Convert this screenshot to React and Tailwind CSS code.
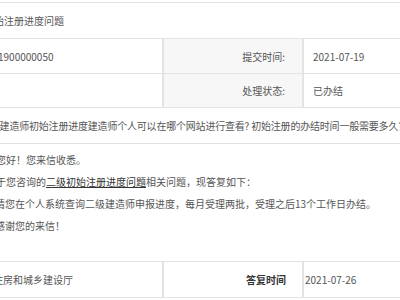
export default function App() {
  const font = { fontFamily: '"Noto Sans CJK SC", "Microsoft YaHei", sans-serif' };
  return (
    <div
      className="w-[400px] h-[300px] overflow-hidden bg-white text-[10px] text-[#555] pt-[2px]"
      style={font}
    >
      <div className="border-b border-[#e3e3e3]">
        {/* Row 1: title */}
        <div className="h-[36px] border-t border-[#e3e3e3] flex items-center whitespace-nowrap">
          <span className="ml-[-66px]">二级建造师初始注册进度问题</span>
        </div>
        {/* Row 2 */}
        <div className="h-[35px] border-t border-[#e3e3e3] flex">
          <div className="w-[164px] shrink-0 border-r-2 border-[#e3e3e3] flex items-center whitespace-nowrap">
            <span className="ml-[-2px]">1900000050</span>
          </div>
          <div className="w-[140px] shrink-0 border-r-2 border-[#e3e3e3] bg-[#f7f7f7] flex items-center justify-end pr-[17px]">
            提交时间:
          </div>
          <div className="flex-1 flex items-center pl-[9px]">2021-07-19</div>
        </div>
        {/* Row 3 */}
        <div className="h-[34px] border-t border-[#e3e3e3] flex">
          <div className="w-[164px] shrink-0 border-r-2 border-[#e3e3e3]"></div>
          <div className="w-[140px] shrink-0 border-r-2 border-[#e3e3e3] bg-[#f7f7f7] flex items-center justify-end pr-[17px]">
            处理状态:
          </div>
          <div className="flex-1 flex items-center pl-[9px]">已办结</div>
        </div>
        {/* Row 4: question */}
        <div className="h-[36px] border-t border-[#e3e3e3] flex items-center whitespace-nowrap">
          <span className="ml-[-20px] tracking-[-0.2px]">
            二级建造师初始注册进度建造师个人可以在哪个网站进行查看? 初始注册的办结时间一般需要多久?
          </span>
        </div>
        {/* Row 5: answer */}
        <div className="h-[118px] border-t border-[#e3e3e3] pt-[5px] whitespace-nowrap leading-[22px]">
          <p className="ml-[-4px]">您好！您来信收悉。</p>
          <p className="ml-[-14px]">
            关于您咨询的<span className="underline text-[#333]">二级初始注册进度问题</span>相关问题，现答复如下：
          </p>
          <p className="ml-[-5px]">请您在个人系统查询二级建造师申报进度，每月受理两批，受理之后13个工作日办结。</p>
          <p className="ml-[-5px]">感谢您的来信！</p>
        </div>
        {/* Row 6 */}
        <div className="h-[36px] border-t border-[#e3e3e3] flex">
          <div className="w-[164px] shrink-0 border-r-2 border-[#e3e3e3] flex items-center whitespace-nowrap">
            <span className="ml-[-7px]">住房和城乡建设厅</span>
          </div>
          <div className="w-[140px] shrink-0 border-r-2 border-[#e3e3e3] flex items-center justify-end pr-[16px] font-bold text-[#333]">
            答复时间
          </div>
          <div className="flex-1 flex items-center pl-[1px]">2021-07-26</div>
        </div>
      </div>
    </div>
  );
}
